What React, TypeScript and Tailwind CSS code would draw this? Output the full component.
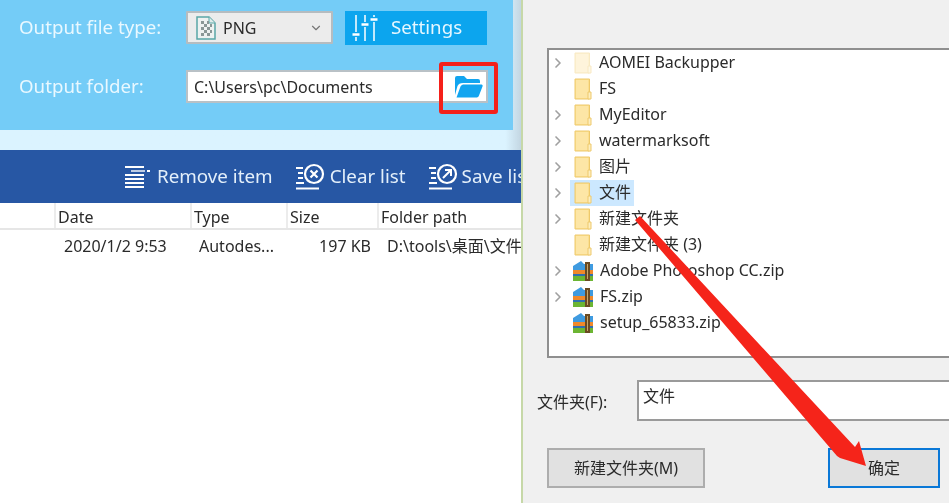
import { ChevronDown, ChevronRight } from "lucide-react"

const font = "font-['Noto_Sans','Noto_Sans_CJK_SC',sans-serif]"

const treeItems = [
  { name: "AOMEI Backupper", kind: "faded", arrow: true },
  { name: "FS", kind: "folder", arrow: false },
  { name: "MyEditor", kind: "folder", arrow: true },
  { name: "watermarksoft", kind: "folder", arrow: true },
  { name: "图片", kind: "folder", arrow: true },
  { name: "文件", kind: "folder", arrow: true, selected: true },
  { name: "新建文件夹", kind: "folder", arrow: true },
  { name: "新建文件夹 (3)", kind: "folder", arrow: false },
  { name: "Adobe Photoshop CC.zip", kind: "zip", arrow: true },
  { name: "FS.zip", kind: "zip", arrow: true },
  { name: "setup_65833.zip", kind: "zip", arrow: false },
]

function FolderIcon({ faded }: { faded?: boolean }) {
  return (
    <svg width="18" height="22" viewBox="0 0 18 22" className={faded ? "opacity-40" : ""}>
      <path d="M1 1h14.5v20H1z" fill="#fbdf8f" stroke="#eec96c" strokeWidth="1" />
      <path d="M2 2h12v18H2z" fill="#fde6a6" />
      <path d="M14 14h3v7h-3z" fill="#fdeebf" stroke="#eec96c" strokeWidth="1" />
    </svg>
  )
}

function ZipIcon() {
  return (
    <svg width="22" height="22" viewBox="0 0 22 22">
      <path d="M1 6l8-5 3 3h9v6H1z" fill="#3f9be0" />
      <path d="M1 10h20v4H1z" fill="#f0892b" />
      <path d="M1 14h20v2H1z" fill="#2f6fb0" />
      <path d="M1 16h20v5H1z" fill="#6cb533" />
      <path d="M13 2h5v19h-5z" fill="#6a4a22" />
      <path d="M15 4h1v15h-1z" fill="#c8a76a" />
    </svg>
  )
}

function SettingsIcon() {
  return (
    <svg width="26" height="28" viewBox="0 0 26 28" fill="none" stroke="white" strokeWidth="1.5">
      <path d="M4 1v17M4 23v4M13 1v7M13 13v14M22 1v2M22 8v19" />
      <path d="M0.5 20.5h7M9.500 10.500h7M18.500 5.500h7" strokeWidth="2.500" />
    </svg>
  )
}

function RemoveIcon() {
  return (
    <svg width="26" height="24" viewBox="0 0 26 24" fill="white" className="shrink-0">
      <path d="M0 1h19v2H0zM0 9h19v2H0zM0 13h19v2H0zM0 17h19v2H0zM0 21h19v2H0z" />
      <path d="M6 5h14v2H6z" opacity="0.7" />
      <path d="M22 5h3v2h-3z" />
    </svg>
  )
}

function ListCircleIcon({ save }: { save?: boolean }) {
  return (
    <svg width="30" height="28" viewBox="0 0 30 28" fill="none" stroke="white" className="shrink-0">
      <path d="M1 5h7M3 10h5M3 15h5M1 20h8M1 25.500h23" strokeWidth="2" />
      <circle cx="19" cy="11" r="9" strokeWidth="2.200" />
      {save ? (
        <path d="M15 15l8-8M17 7h6v6" strokeWidth="2" />
      ) : (
        <path d="M15.500 7.500l7 7M22.500 7.500l-7 7" strokeWidth="2.200" />
      )}
    </svg>
  )
}

function OpenFolderIcon() {
  return (
    <svg width="28" height="22" viewBox="0 0 28 22">
      <path d="M0 19V2a2 2 0 0 1 2-2h7l3 3h11a2 2 0 0 1 2 2v2H8C5 7 3.500 8 2.500 10z" fill="#12a5f0" />
      <path d="M1.500 21.500l4-11C6.500 9 7.500 8.500 9 8.500h17.500c1 0 1.500 1 1 2l-3.500 9c-.5 1.500-1.500 2-3 2z" fill="#12a5f0" />
    </svg>
  )
}

function PngIcon() {
  return (
    <svg width="20" height="24" viewBox="0 0 20 24">
      <path d="M1 1h12l6 6v16H1z" fill="#eef2f1" stroke="#5aa7a6" strokeWidth="1.500" />
      <path d="M13 1v6h6" fill="#dfeceb" stroke="#5aa7a6" />
      <path
        d="M5 5h3v3H5zM8 8h3v3H8zM11 5h2v3h-2zM5 11h3v3H5zM11 11h3v3h-3zM8 14h3v3H8zM14 8h2v3h-2zM14 14h2v3h-2zM5 17h3v3H5zM11 17h3v3h-3z"
        fill="#8a9796"
      />
    </svg>
  )
}

export default function App() {
  return (
    <div className={`relative flex h-[503px] w-[949px] overflow-hidden bg-white text-[#2b2b2b] blur-[0.35px] ${font}`}>
      {/* converter window */}
      <div className="flex w-[523px] shrink-0 flex-col border-r-2 border-[#c6d8a8]">
        <div className="h-[150px] bg-gradient-to-r from-[#dbf3ff] from-[97%] to-[#c3d6e2]">
          <div className="h-[130px] w-[513px] bg-[#74ccf7] pl-[19px] pt-[11px]">
            <div className="flex h-[33px] items-center">
              <span className="w-[167px] text-[18.7px] text-[#e9f8ff]">Output file type:</span>
              <div className="flex h-[33px] w-[147px] items-center rounded-[1px] border-2 border-[#b5bcc0] bg-[#ececec] pl-2 pr-2">
                <PngIcon />
                <span className="ml-[7px] text-[16px]">PNG</span>
                <ChevronDown className="ml-auto h-3.5 w-3.5 text-[#777]" />
              </div>
              <div className="ml-[12px] flex h-[34px] w-[142px] items-center bg-[#0ca5ee] pl-[7px] text-white">
                <SettingsIcon />
                <span className="ml-[13px] text-[18.7px] text-[#e6f7ff]">Settings</span>
              </div>
            </div>
            <div className="mt-[26px] flex h-[33px] items-center">
              <span className="w-[167px] text-[18.7px] text-[#e9f8ff]">Output folder:</span>
              <div className="flex h-[33px] w-[302px] items-center justify-between border-2 border-[#b9c1c6] bg-white pl-[6px] pr-[3px]">
                <span className="text-[16px]">C:\Users\pc\Documents</span>
                <OpenFolderIcon />
              </div>
            </div>
          </div>
        </div>

        <div className="flex h-[53px] items-center overflow-hidden whitespace-nowrap bg-[#2757a4] pl-[125px] text-[18.8px] text-[#e3effa]">
          <RemoveIcon />
          <span className="ml-[6px]">Remove item</span>
          <div className="ml-[22px]">
            <ListCircleIcon />
          </div>
          <span className="ml-[5px]">Clear list</span>
          <div className="ml-[22px]">
            <ListCircleIcon save />
          </div>
          <span className="ml-[4px]">Save list</span>
        </div>

        <div className="flex h-[27px] items-center border-b-2 border-[#e6e6e6] text-[16px]">
          <div className="h-full w-[56px] border-r-2 border-[#ececec]" />
          <div className="flex h-full w-[136px] items-center border-r-2 border-[#ececec] pl-[2px] pt-[2px]">Date</div>
          <div className="flex h-full w-[96px] items-center border-r-2 border-[#ececec] pl-[2px] pt-[2px]">Type</div>
          <div className="flex h-full w-[91px] items-center border-r-2 border-[#ececec] pl-[2px] pt-[2px]">Size</div>
          <div className="flex h-full items-center pl-[2px] pt-[2px]">Folder path</div>
        </div>

        <div className="flex h-[32px] items-center whitespace-nowrap text-[16px]">
          <span className="ml-[64px] w-[135px]">2020/1/2 9:53</span>
          <span className="w-[98px]">Autodes...</span>
          <span className="w-[74px] text-right">197 KB</span>
          <span className="ml-[16px] w-[134px] overflow-hidden">D:\tools\桌面\文件</span>
        </div>
      </div>

      {/* browse for folder dialog */}
      <div className="flex-1 bg-[#f0f0f0] pl-[24px] pt-[48px]">
        <div className="h-[310px] border-2 border-r-0 border-[#8f8f8f] bg-white">
          {treeItems.map((item) => (
            <div key={item.name} className="flex h-[26px] items-center">
              <div className="flex w-[17px] justify-center">
                {item.arrow && <ChevronRight className="h-4 w-4 text-[#a0a0a0]" strokeWidth={2.5} />}
              </div>
              <div
                className={`ml-[4px] flex h-[26px] items-center text-[16px] ${
                  item.kind === "zip" ? "gap-[6px] pl-[2px]" : "gap-[7px] pl-[4px]"
                } ${item.selected ? "bg-[#cce8ff] pr-[3px]" : ""}`}
              >
                {item.kind === "zip" ? <ZipIcon /> : <FolderIcon faded={item.kind === "faded"} />}
                <span className="whitespace-nowrap pb-[2px]">{item.name}</span>
              </div>
            </div>
          ))}
        </div>

        <div className="-ml-[10px] mt-[22px] flex items-center">
          <span className="w-[100px] pt-[3px] text-[16px]">文件夹(F):</span>
          <div className="h-[41px] flex-1 border-2 border-r-0 border-[#9a9a9a] bg-white pl-[4px] pt-[2px] text-[16px]">
            文件
          </div>
        </div>

        <div className="mt-[27px] flex items-center">
          <div className="flex h-[40px] w-[158px] items-center justify-center border-2 border-[#adadad] bg-[#e1e1e1] text-[16px]">
            新建文件夹(M)
          </div>
          <div className="ml-[123px] flex h-[40px] w-[112px] items-center justify-center border-2 border-[#0a78d7] bg-[#e1e1e1] text-[16px]">
            确定
          </div>
        </div>
      </div>

      {/* red annotations */}
      <div className="absolute left-[439px] top-[62px] h-[52px] w-[59px] rounded-[3px] border-[4px] border-[#f5201a]" />
      <svg className="absolute inset-0" width="949" height="503" viewBox="0 0 949 503">
        <path d="M635 220 L640 216 L855 447 L859 441 L866 466 L840 458 L837 456 Z" fill="#f5241a" />
      </svg>
    </div>
  )
}
